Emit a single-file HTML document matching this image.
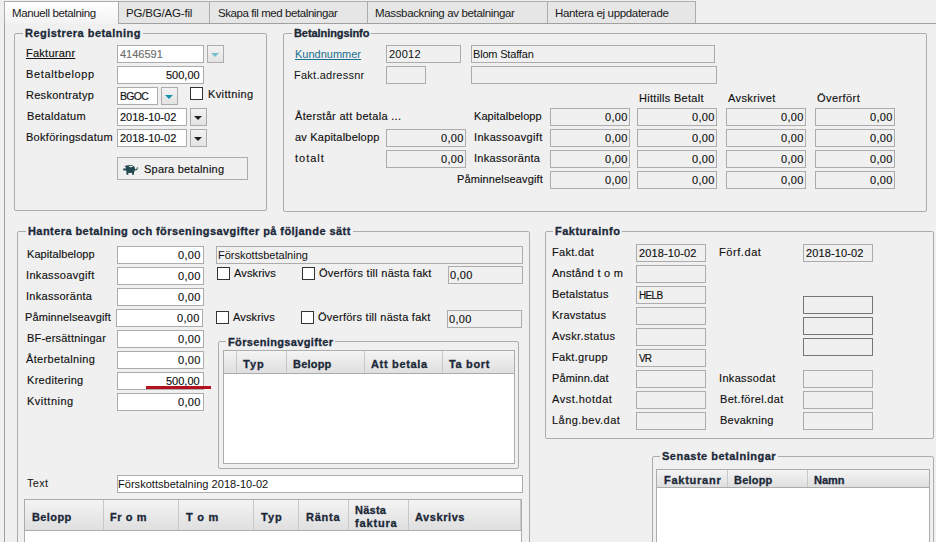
<!DOCTYPE html><html><head><meta charset="utf-8"><style>
html,body{margin:0;padding:0;}
body{width:936px;height:542px;overflow:hidden;background:#f0f0f0;position:relative;font-family:"Liberation Sans",sans-serif;}
.a{position:absolute;}
.t{position:absolute;font-size:11px;line-height:13px;color:#111;white-space:nowrap;-webkit-text-stroke:0.15px currentColor;}
.b{font-weight:bold;color:#1b2838;-webkit-text-stroke:0.3px currentColor;}
.box{position:absolute;box-sizing:border-box;border:1px solid #acacac;background:#fff;}
.ro{position:absolute;box-sizing:border-box;border:1px solid #acacac;background:#f0f0f0;}
.dk{position:absolute;box-sizing:border-box;border:1px solid #777777;background:#f0f0f0;}
.grp{position:absolute;box-sizing:border-box;border:1px solid #acacac;border-radius:2px;}
.chk{position:absolute;box-sizing:border-box;border:1px solid #333;background:#fff;}
.btn{position:absolute;box-sizing:border-box;border:1px solid #acacac;background:linear-gradient(#f2f2f2,#e3e3e3);}
.tab{position:absolute;box-sizing:border-box;border:1px solid #acacac;border-bottom:none;background:#e6e6e6;}
.tt{position:absolute;font-size:11.5px;line-height:13px;color:#1a1a1a;white-space:nowrap;}
.hdr{position:absolute;box-sizing:border-box;border:1px solid #acacac;background:#fff;}
.hd{position:absolute;box-sizing:border-box;background:linear-gradient(#f4f4f4,#dfdfdf);border-bottom:1px solid #acacac;}
.sep{position:absolute;width:1px;background:#c8c8c8;}
.hb{position:absolute;font-size:11px;line-height:13px;font-weight:bold;color:#1b2838;white-space:nowrap;-webkit-text-stroke:0.3px currentColor;}
.gt{background:#f0f0f0;padding:0 2px;margin-left:-2px;}
</style></head><body>
<div class="a" style="left:4px;top:23px;width:940px;height:600px;border-left:1px solid #a0a0a0;border-top:1px solid #a0a0a0;"></div>
<div class="tab" style="left:118px;top:1px;width:92px;height:22px;"></div>
<div class="tt" style="left:126.00px;top:7px;letter-spacing:-0.182px;">PG/BG/AG-fil</div>
<div class="tab" style="left:209px;top:1px;width:159px;height:22px;"></div>
<div class="tt" style="left:218.00px;top:7px;letter-spacing:-0.417px;">Skapa fil med betalningar</div>
<div class="tab" style="left:367px;top:1px;width:181px;height:22px;"></div>
<div class="tt" style="left:375.00px;top:7px;letter-spacing:-0.346px;">Massbackning av betalningar</div>
<div class="tab" style="left:547px;top:1px;width:149px;height:22px;"></div>
<div class="tt" style="left:555.00px;top:7px;letter-spacing:-0.333px;">Hantera ej uppdaterade</div>
<div class="tab" style="left:4px;top:1px;width:115px;height:23px;background:linear-gradient(#ffffff,#f2f2f2);"></div>
<div class="tt" style="left:12.00px;top:7px;letter-spacing:-0.375px;">Manuell betalning</div>
<div class="grp" style="left:14px;top:33px;width:253px;height:178px;"></div>
<div class="t b gt" style="left:25.00px;top:27px;letter-spacing:0.474px;">Registrera betalning</div>
<div class="t" style="left:26.00px;top:47px;letter-spacing:0.250px;"><u>Fakturanr</u></div>
<div class="t" style="left:26.00px;top:68px;letter-spacing:0.636px;">Betaltbelopp</div>
<div class="t" style="left:26.00px;top:89px;letter-spacing:0.273px;">Reskontratyp</div>
<div class="t" style="left:27.00px;top:110px;letter-spacing:0.333px;">Betaldatum</div>
<div class="t" style="left:26.00px;top:131px;letter-spacing:0.286px;">Bokföringsdatum</div>
<div class="box" style="left:117px;top:45px;width:87px;height:18px;"></div>
<div class="t" style="left:120.00px;top:48px;color:#6d6d6d">4146591</div>
<div class="btn" style="left:207px;top:45px;width:17px;height:18px;"></div>
<div class="a" style="left:211px;top:53px;width:0;height:0;border-left:4px solid transparent;border-right:4px solid transparent;border-top:4px solid #74bfce;"></div>
<div class="box" style="left:117px;top:66px;width:87px;height:18px;"></div>
<div class="t" style="left:166.00px;top:69px;">500,00</div>
<div class="box" style="left:117px;top:87px;width:41px;height:18px;"></div>
<div class="t" style="left:120.00px;top:90px;letter-spacing:-0.667px;font-size:10.5px">BGOC</div>
<div class="btn" style="left:161px;top:87px;width:17px;height:18px;"></div>
<div class="a" style="left:165px;top:95px;width:0;height:0;border-left:4px solid transparent;border-right:4px solid transparent;border-top:4px solid #1591ab;"></div>
<div class="chk" style="left:190px;top:87px;width:13px;height:13px;"></div>
<div class="t" style="left:208.00px;top:88px;letter-spacing:0.375px;">Kvittning</div>
<div class="box" style="left:117px;top:108px;width:70px;height:18px;"></div>
<div class="t" style="left:120.00px;top:111px;">2018-10-02</div>
<div class="btn" style="left:190px;top:108px;width:17px;height:18px;"></div>
<div class="a" style="left:194px;top:116px;width:0;height:0;border-left:4px solid transparent;border-right:4px solid transparent;border-top:4px solid #222;"></div>
<div class="box" style="left:117px;top:129px;width:70px;height:18px;"></div>
<div class="t" style="left:120.00px;top:132px;">2018-10-02</div>
<div class="btn" style="left:190px;top:129px;width:17px;height:18px;"></div>
<div class="a" style="left:194px;top:137px;width:0;height:0;border-left:4px solid transparent;border-right:4px solid transparent;border-top:4px solid #222;"></div>
<div class="btn" style="left:117px;top:157px;width:131px;height:23px;background:#f0f0f0;border-color:#adadad;"></div>
<svg class="a" style="left:121px;top:162px" width="20" height="15" viewBox="0 0 20 15">
<g fill="#234a4f">
<ellipse cx="9.3" cy="6.9" rx="4.8" ry="4.0"/><path d="M5.5 8 L13.5 8 L13.2 10.6 L5.8 10.6 Z"/>
<path d="M3.4 3.9 L7.0 3.2 L6.4 6.2 Z"/>
<path d="M2.2 6.6 L4.8 6.4 L4.8 8.6 L2.3 8.4 Z"/>
<path d="M5.4 10 L7.4 10 L7.3 12.7 L5.5 12.7 Z"/>
<path d="M11 10 L13 10 L12.9 12.7 L11.1 12.7 Z"/>
</g>
<path d="M13.6 7.9 Q15.6 7.9 16.2 6.7 Q16.6 5.7 15.9 5.4" fill="none" stroke="#234a4f" stroke-width="1.1"/>
<ellipse cx="9.9" cy="4.5" rx="2.0" ry="0.75" fill="#f0f0f0"/>
</svg>
<div class="t" style="left:144.00px;top:163px;letter-spacing:0.214px;">Spara betalning</div>
<div class="grp" style="left:283px;top:33px;width:644px;height:179px;"></div>
<div class="t b gt" style="left:294.00px;top:27px;letter-spacing:-0.077px;">Betalningsinfo</div>
<div class="t" style="left:295.00px;top:48px;color:#1a6e8e;-webkit-text-stroke:0"><u>Kundnummer</u></div>
<div class="t" style="left:294.00px;top:69px;letter-spacing:0.250px;-webkit-text-stroke:0">Fakt.adressnr</div>
<div class="ro" style="left:386px;top:45px;width:75px;height:18px;"></div>
<div class="t" style="left:389.00px;top:48px;letter-spacing:0.250px;-webkit-text-stroke:0">20012</div>
<div class="ro" style="left:471px;top:45px;width:244px;height:18px;"></div>
<div class="t" style="left:473.00px;top:48px;letter-spacing:-0.182px;-webkit-text-stroke:0">Blom Staffan</div>
<div class="ro" style="left:386px;top:66px;width:40px;height:18px;"></div>
<div class="ro" style="left:471px;top:66px;width:246px;height:18px;"></div>
<div class="t" style="left:295.00px;top:110px;letter-spacing:0.318px;">Återstår att betala ...</div>
<div class="t" style="left:295.00px;top:131px;letter-spacing:0.200px;">av Kapitalbelopp</div>
<div class="t" style="left:295.00px;top:152px;letter-spacing:1.000px;">totalt</div>
<div class="ro" style="left:386px;top:129px;width:80px;height:18px;"></div>
<div class="t" style="left:441.00px;top:132px;letter-spacing:0.333px;">0,00</div>
<div class="ro" style="left:386px;top:150px;width:80px;height:18px;"></div>
<div class="t" style="left:441.00px;top:153px;letter-spacing:0.333px;">0,00</div>
<div class="t" style="left:474.00px;top:110px;letter-spacing:0.083px;">Kapitalbelopp</div>
<div class="t" style="left:474.00px;top:131px;letter-spacing:0.333px;">Inkassoavgift</div>
<div class="t" style="left:474.00px;top:152px;letter-spacing:0.273px;">Inkassoränta</div>
<div class="t" style="left:457.00px;top:173px;letter-spacing:0.133px;">Påminnelseavgift</div>
<div class="t" style="left:639.00px;top:92px;letter-spacing:0.286px;">Hittills Betalt</div>
<div class="t" style="left:728.00px;top:92px;letter-spacing:0.375px;">Avskrivet</div>
<div class="t" style="left:817.00px;top:92px;letter-spacing:0.429px;">Överfört</div>
<div class="ro" style="left:550px;top:108px;width:80px;height:18px;"></div>
<div class="t" style="left:605.00px;top:111px;letter-spacing:0.333px;">0,00</div>
<div class="ro" style="left:637px;top:108px;width:80px;height:18px;"></div>
<div class="t" style="left:692.00px;top:111px;letter-spacing:0.333px;">0,00</div>
<div class="ro" style="left:726px;top:108px;width:80px;height:18px;"></div>
<div class="t" style="left:781.00px;top:111px;letter-spacing:0.333px;">0,00</div>
<div class="ro" style="left:815px;top:108px;width:80px;height:18px;"></div>
<div class="t" style="left:870.00px;top:111px;letter-spacing:0.333px;">0,00</div>
<div class="ro" style="left:550px;top:129px;width:80px;height:18px;"></div>
<div class="t" style="left:605.00px;top:132px;letter-spacing:0.333px;">0,00</div>
<div class="ro" style="left:637px;top:129px;width:80px;height:18px;"></div>
<div class="t" style="left:692.00px;top:132px;letter-spacing:0.333px;">0,00</div>
<div class="ro" style="left:726px;top:129px;width:80px;height:18px;"></div>
<div class="t" style="left:781.00px;top:132px;letter-spacing:0.333px;">0,00</div>
<div class="ro" style="left:815px;top:129px;width:80px;height:18px;"></div>
<div class="t" style="left:870.00px;top:132px;letter-spacing:0.333px;">0,00</div>
<div class="ro" style="left:550px;top:150px;width:80px;height:18px;"></div>
<div class="t" style="left:605.00px;top:153px;letter-spacing:0.333px;">0,00</div>
<div class="ro" style="left:637px;top:150px;width:80px;height:18px;"></div>
<div class="t" style="left:692.00px;top:153px;letter-spacing:0.333px;">0,00</div>
<div class="ro" style="left:726px;top:150px;width:80px;height:18px;"></div>
<div class="t" style="left:781.00px;top:153px;letter-spacing:0.333px;">0,00</div>
<div class="ro" style="left:815px;top:150px;width:80px;height:18px;"></div>
<div class="t" style="left:870.00px;top:153px;letter-spacing:0.333px;">0,00</div>
<div class="ro" style="left:550px;top:171px;width:80px;height:18px;"></div>
<div class="t" style="left:605.00px;top:174px;letter-spacing:0.333px;">0,00</div>
<div class="ro" style="left:637px;top:171px;width:80px;height:18px;"></div>
<div class="t" style="left:692.00px;top:174px;letter-spacing:0.333px;">0,00</div>
<div class="ro" style="left:726px;top:171px;width:80px;height:18px;"></div>
<div class="t" style="left:781.00px;top:174px;letter-spacing:0.333px;">0,00</div>
<div class="ro" style="left:815px;top:171px;width:80px;height:18px;"></div>
<div class="t" style="left:870.00px;top:174px;letter-spacing:0.333px;">0,00</div>
<div class="grp" style="left:17px;top:231px;width:513px;height:400px;"></div>
<div class="t b gt" style="left:28.00px;top:225px;letter-spacing:0.429px;">Hantera betalning och förseningsavgifter på följande sätt</div>
<div class="t" style="left:27.00px;top:248px;letter-spacing:0.083px;">Kapitalbelopp</div>
<div class="box" style="left:117px;top:246px;width:87px;height:18px;"></div>
<div class="t" style="left:178.00px;top:249px;letter-spacing:0.333px;">0,00</div>
<div class="t" style="left:26.00px;top:269px;letter-spacing:0.333px;">Inkassoavgift</div>
<div class="box" style="left:117px;top:267px;width:87px;height:18px;"></div>
<div class="t" style="left:178.00px;top:270px;letter-spacing:0.333px;">0,00</div>
<div class="t" style="left:26.00px;top:290px;letter-spacing:0.273px;">Inkassoränta</div>
<div class="box" style="left:117px;top:288px;width:87px;height:18px;"></div>
<div class="t" style="left:178.00px;top:291px;letter-spacing:0.333px;">0,00</div>
<div class="t" style="left:25.00px;top:311px;letter-spacing:0.133px;">Påminnelseavgift</div>
<div class="box" style="left:116px;top:309px;width:87px;height:18px;"></div>
<div class="t" style="left:177.00px;top:312px;letter-spacing:0.333px;">0,00</div>
<div class="t" style="left:27.00px;top:332px;letter-spacing:0.214px;">BF-ersättningar</div>
<div class="box" style="left:117px;top:330px;width:87px;height:18px;"></div>
<div class="t" style="left:178.00px;top:333px;letter-spacing:0.333px;">0,00</div>
<div class="t" style="left:26.00px;top:353px;letter-spacing:0.333px;">Återbetalning</div>
<div class="box" style="left:117px;top:351px;width:87px;height:18px;"></div>
<div class="t" style="left:178.00px;top:354px;letter-spacing:0.333px;">0,00</div>
<div class="t" style="left:27.00px;top:374px;letter-spacing:0.300px;">Kreditering</div>
<div class="box" style="left:117px;top:372px;width:87px;height:18px;"></div>
<div class="t" style="left:166.00px;top:375px;">500,00</div>
<div class="t" style="left:27.00px;top:395px;letter-spacing:0.500px;">Kvittning</div>
<div class="box" style="left:117px;top:393px;width:87px;height:18px;"></div>
<div class="t" style="left:178.00px;top:396px;letter-spacing:0.333px;">0,00</div>
<div class="a" style="left:146px;top:386px;width:65px;height:3px;background:#b5101e;"></div>
<div class="ro" style="left:216px;top:246px;width:307px;height:18px;"></div>
<div class="t" style="left:218.00px;top:249px;-webkit-text-stroke:0">Förskottsbetalning</div>
<div class="chk" style="left:217px;top:267px;width:13px;height:13px;"></div>
<div class="t" style="left:234.00px;top:267px;letter-spacing:0.143px;">Avskrivs</div>
<div class="chk" style="left:302px;top:267px;width:13px;height:13px;"></div>
<div class="t" style="left:319.00px;top:267px;letter-spacing:0.261px;">Överförs till nästa fakt</div>
<div class="ro" style="left:448px;top:266px;width:75px;height:18px;"></div>
<div class="t" style="left:450.00px;top:269px;letter-spacing:0.333px;">0,00</div>
<div class="chk" style="left:216px;top:311px;width:13px;height:13px;"></div>
<div class="t" style="left:233.00px;top:311px;letter-spacing:0.143px;">Avskrivs</div>
<div class="chk" style="left:301px;top:311px;width:13px;height:13px;"></div>
<div class="t" style="left:318.00px;top:311px;letter-spacing:0.261px;">Överförs till nästa fakt</div>
<div class="ro" style="left:447px;top:310px;width:75px;height:18px;"></div>
<div class="t" style="left:449.00px;top:313px;letter-spacing:0.333px;">0,00</div>
<div class="grp" style="left:218px;top:341px;width:301px;height:128px;"></div>
<div class="t b gt" style="left:228.00px;top:336px;letter-spacing:0.353px;">Förseningsavgifter</div>
<div class="hdr" style="left:223px;top:350px;width:292px;height:114px;"></div>
<div class="hd" style="left:224px;top:351px;width:290px;height:23px;"></div>
<div class="sep" style="left:236px;top:351px;height:22px;"></div>
<div class="sep" style="left:286px;top:351px;height:22px;"></div>
<div class="sep" style="left:364px;top:351px;height:22px;"></div>
<div class="sep" style="left:442px;top:351px;height:22px;"></div>
<div class="hb" style="left:243.00px;top:358px;letter-spacing:1.000px;">Typ</div>
<div class="hb" style="left:293.00px;top:358px;letter-spacing:0.200px;">Belopp</div>
<div class="hb" style="left:371.00px;top:358px;letter-spacing:0.667px;">Att betala</div>
<div class="hb" style="left:449.00px;top:358px;letter-spacing:0.667px;">Ta bort</div>
<div class="t" style="left:27.00px;top:477px;letter-spacing:0.333px;-webkit-text-stroke:0">Text</div>
<div class="box" style="left:117px;top:475px;width:406px;height:18px;"></div>
<div class="t" style="left:118.00px;top:478px;letter-spacing:0.036px;-webkit-text-stroke:0">Förskottsbetalning 2018-10-02</div>
<div class="hdr" style="left:24px;top:499px;width:498px;height:62px;"></div>
<div class="hd" style="left:25px;top:500px;width:496px;height:31px;"></div>
<div class="sep" style="left:103px;top:500px;height:30px;"></div>
<div class="sep" style="left:178px;top:500px;height:30px;"></div>
<div class="sep" style="left:253px;top:500px;height:30px;"></div>
<div class="sep" style="left:298px;top:500px;height:30px;"></div>
<div class="sep" style="left:348px;top:500px;height:30px;"></div>
<div class="sep" style="left:408px;top:500px;height:30px;"></div>
<div class="sep" style="left:520px;top:500px;height:30px;"></div>
<div class="hb" style="left:32.00px;top:511px;letter-spacing:0.400px;">Belopp</div>
<div class="hb" style="left:110.00px;top:511px;letter-spacing:0.600px;">Fr o m</div>
<div class="hb" style="left:186.00px;top:511px;letter-spacing:0.750px;">T o m</div>
<div class="hb" style="left:261.00px;top:511px;letter-spacing:1.000px;">Typ</div>
<div class="hb" style="left:306.00px;top:511px;letter-spacing:0.750px;">Ränta</div>
<div class="hb" style="left:415.00px;top:511px;letter-spacing:0.571px;">Avskrivs</div>
<div class="hb" style="left:355.00px;top:504px;letter-spacing:0.250px;">Nästa</div>
<div class="hb" style="left:355.00px;top:517px;letter-spacing:0.833px;">faktura</div>
<div class="grp" style="left:545px;top:231px;width:389px;height:208px;"></div>
<div class="t b gt" style="left:555.00px;top:225px;letter-spacing:0.500px;">Fakturainfo</div>
<div class="t" style="left:552.00px;top:246px;letter-spacing:0.286px;">Fakt.dat</div>
<div class="ro" style="left:636px;top:244px;width:70px;height:18px;"></div>
<div class="t" style="left:639.00px;top:247px;letter-spacing:0.111px;">2018-10-02</div>
<div class="t" style="left:552.00px;top:267px;letter-spacing:0.250px;">Anstånd t o m</div>
<div class="ro" style="left:636px;top:265px;width:70px;height:18px;"></div>
<div class="t" style="left:552.00px;top:288px;letter-spacing:0.200px;">Betalstatus</div>
<div class="ro" style="left:636px;top:286px;width:70px;height:18px;"></div>
<div class="t" style="left:639.00px;top:289px;letter-spacing:-0.667px;font-size:10px">HELB</div>
<div class="t" style="left:552.00px;top:309px;letter-spacing:0.222px;">Kravstatus</div>
<div class="ro" style="left:636px;top:307px;width:70px;height:18px;"></div>
<div class="t" style="left:552.00px;top:330px;letter-spacing:0.364px;">Avskr.status</div>
<div class="ro" style="left:636px;top:328px;width:70px;height:18px;"></div>
<div class="t" style="left:552.00px;top:351px;letter-spacing:0.333px;">Fakt.grupp</div>
<div class="ro" style="left:636px;top:349px;width:70px;height:18px;"></div>
<div class="t" style="left:639.00px;top:352px;letter-spacing:-1.000px;font-size:10px">VR</div>
<div class="t" style="left:552.00px;top:372px;letter-spacing:0.111px;">Påminn.dat</div>
<div class="ro" style="left:636px;top:370px;width:70px;height:18px;"></div>
<div class="t" style="left:552.00px;top:393px;letter-spacing:0.500px;">Avst.hotdat</div>
<div class="ro" style="left:636px;top:391px;width:70px;height:18px;"></div>
<div class="t" style="left:552.00px;top:414px;letter-spacing:0.455px;">Lång.bev.dat</div>
<div class="ro" style="left:636px;top:412px;width:70px;height:18px;"></div>
<div class="t" style="left:719.00px;top:246px;letter-spacing:0.571px;">Förf.dat</div>
<div class="ro" style="left:803px;top:244px;width:70px;height:18px;"></div>
<div class="t" style="left:806.00px;top:247px;letter-spacing:0.111px;">2018-10-02</div>
<div class="dk" style="left:803px;top:296px;width:70px;height:18px;"></div>
<div class="dk" style="left:803px;top:317px;width:70px;height:18px;"></div>
<div class="dk" style="left:803px;top:338px;width:70px;height:18px;"></div>
<div class="t" style="left:719.00px;top:372px;letter-spacing:0.333px;">Inkassodat</div>
<div class="ro" style="left:803px;top:370px;width:70px;height:18px;"></div>
<div class="t" style="left:720.00px;top:393px;letter-spacing:0.333px;">Bet.förel.dat</div>
<div class="ro" style="left:803px;top:391px;width:70px;height:18px;"></div>
<div class="t" style="left:720.00px;top:414px;letter-spacing:0.250px;">Bevakning</div>
<div class="ro" style="left:803px;top:412px;width:70px;height:18px;"></div>
<div class="grp" style="left:652px;top:456px;width:282px;height:200px;"></div>
<div class="t b gt" style="left:662.00px;top:450px;letter-spacing:0.500px;">Senaste betalningar</div>
<div class="hdr" style="left:656px;top:469px;width:274px;height:92px;"></div>
<div class="hd" style="left:657px;top:470px;width:272px;height:18px;"></div>
<div class="sep" style="left:727px;top:470px;height:17px;"></div>
<div class="sep" style="left:807px;top:470px;height:17px;"></div>
<div class="hb" style="left:664.00px;top:474px;letter-spacing:0.750px;">Fakturanr</div>
<div class="hb" style="left:734.00px;top:474px;letter-spacing:0.200px;">Belopp</div>
<div class="hb" style="left:814.00px;top:474px;">Namn</div>
</body></html>
